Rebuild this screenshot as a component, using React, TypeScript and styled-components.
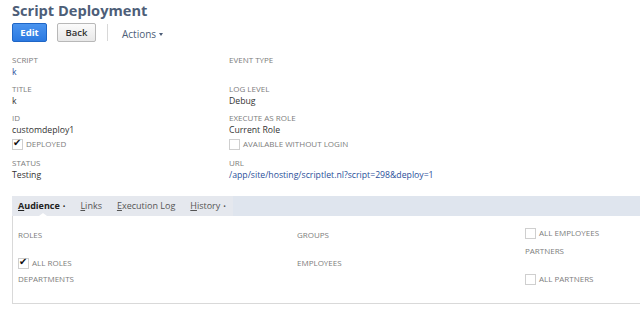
import React from 'react';
import styled, {createGlobalStyle} from 'styled-components';

const FONT = `'Open Sans', 'Noto Sans', Arial, sans-serif`;

const GlobalStyle = createGlobalStyle`
  html, body {
    margin: 0;
    padding: 0;
    background: #fff;
    overflow: hidden;
  }
  body {
    font-family: ${FONT};
  }
`;

type FieldData = {label: string; value?: string; link?: boolean};

const leftFields: FieldData[] = [
  {label: 'Script', value: 'k', link: true},
  {label: 'Title', value: 'k'},
  {label: 'ID', value: 'customdeploy1'},
];

const rightFields: FieldData[] = [
  {label: 'Event Type'},
  {label: 'Log Level', value: 'Debug'},
  {label: 'Execute As Role', value: 'Current Role'},
];

const tabs = [
  {key: 'A', rest: 'udience', active: true, dot: true},
  {key: 'L', rest: 'inks'},
  {key: 'E', rest: 'xecution Log'},
  {key: 'H', rest: 'istory', dot: true},
];

const Field = ({label, value, link}: FieldData) => (
  <FieldBox>
    <Label>{label}</Label>
    <Value $link={link}>{value ?? '\u00a0'}</Value>
  </FieldBox>
);

const Check = ({checked, label}: {checked?: boolean; label: string}) => (
  <CheckRow>
    <Box>{checked && <Tick>✔</Tick>}</Box>
    <Label>{label}</Label>
  </CheckRow>
);

export default function App() {
  return (
    <Page>
      <GlobalStyle />
      <Title>Script Deployment</Title>
      <Toolbar>
        <PrimaryButton>Edit</PrimaryButton>
        <Button>Back</Button>
        <Divider />
        <Actions>
          Actions<Caret />
        </Actions>
      </Toolbar>

      <Fields>
        <Column>
          {leftFields.map((f) => (
            <Field key={f.label} {...f} />
          ))}
          <FieldCheck>
            <Check checked label="Deployed" />
          </FieldCheck>
          <Field label="Status" value="Testing" />
        </Column>
        <Column>
          {rightFields.map((f) => (
            <Field key={f.label} {...f} />
          ))}
          <FieldCheck>
            <Check label="Available without login" />
          </FieldCheck>
          <Field
            label="URL"
            value="/app/site/hosting/scriptlet.nl?script=298&deploy=1"
            link
          />
        </Column>
      </Fields>

      <TabBar>
        <TabGroup>
          {tabs.map((t) => (
            <Tab key={t.key} $active={t.active}>
              <u>{t.key}</u>
              {t.rest}
              {t.dot && <Dot>•</Dot>}
            </Tab>
          ))}
          <Notch />
        </TabGroup>
      </TabBar>

      <Panel>
        <PanelColumn $width={279}>
          <PanelLabel $top={13}>Roles</PanelLabel>
          <PanelCheck $top={16}>
            <Check checked label="All Roles" />
          </PanelCheck>
          <PanelLabel $top={4}>Departments</PanelLabel>
        </PanelColumn>
        <PanelColumn $width={228}>
          <PanelLabel $top={13}>Groups</PanelLabel>
          <PanelLabel $top={16}>Employees</PanelLabel>
        </PanelColumn>
        <PanelColumn>
          <PanelCheck $top={11}>
            <Check label="All Employees" />
          </PanelCheck>
          <PanelLabel $top={6}>Partners</PanelLabel>
          <PanelCheck $top={16}>
            <Check label="All Partners" />
          </PanelCheck>
        </PanelColumn>
      </Panel>
    </Page>
  );
}

const Page = styled.div`
  width: 640px;
  box-sizing: border-box;
  padding-left: 12px;
  font-family: ${FONT};
`;

const Title = styled.h1`
  margin: 0;
  font-size: 14.6px;
  line-height: 20px;
  font-weight: 700;
  color: #4d5e78;
`;

const Toolbar = styled.div`
  display: flex;
  align-items: center;
  height: 19px;
  margin-top: 3px;
`;

const BaseButton = styled.button`
  height: 19px;
  padding: 0;
  border-radius: 2px;
  font-family: ${FONT};
  font-size: 9.5px;
  font-weight: 700;
  line-height: 17px;
  cursor: pointer;
`;

const PrimaryButton = styled(BaseButton)`
  width: 35px;
  background: linear-gradient(#4a94ef, #2b79e1);
  border: 1px solid #1f66c6;
  color: #fff;
`;

const Button = styled(BaseButton)`
  width: 39px;
  margin-left: 10px;
  background: linear-gradient(#fbfbfb, #e8e8e8);
  border: 1px solid #b8b8b8;
  color: #333;
  font-weight: 600;
`;

const Divider = styled.div`
  width: 1px;
  height: 17px;
  margin-left: 11px;
  background: #d8d8d8;
`;

const Actions = styled.div`
  display: flex;
  align-items: center;
  margin-left: 14px;
  margin-top: 3px;
  font-size: 10px;
  color: #4d5e78;
`;

const Caret = styled.span`
  display: inline-block;
  margin-left: 3px;
  width: 0;
  height: 0;
  border-left: 2.5px solid transparent;
  border-right: 2.5px solid transparent;
  border-top: 3px solid #4d5e78;
`;

const Fields = styled.div`
  display: grid;
  grid-template-columns: 217px 1fr;
  margin-top: 12px;
`;

const Column = styled.div`
  display: flex;
  flex-direction: column;
`;

const FieldBox = styled.div`
  display: flex;
  flex-direction: column;
  margin-bottom: 4px;
`;

const Label = styled.span`
  font-size: 8px;
  line-height: 12px;
  text-transform: uppercase;
  color: #7d7d7d;
  white-space: nowrap;
`;

const Value = styled.span<{$link?: boolean}>`
  font-size: 8.7px;
  line-height: 13px;
  color: ${({$link}) => ($link ? '#2b4f9a' : '#333')};
  white-space: nowrap;
`;

const FieldCheck = styled.div`
  height: 19px;
  margin-top: -3px;
`;

const CheckRow = styled.div`
  display: flex;
  align-items: center;
  gap: 3px;
  height: 12px;
`;

const Box = styled.span`
  position: relative;
  flex: none;
  width: 9px;
  height: 9px;
  border: 1px solid #cfcfcf;
  background: #fff;
`;

const Tick = styled.span`
  position: absolute;
  left: 0;
  top: -3px;
  font-size: 9.5px;
  line-height: 12px;
  color: #111;
`;

const TabBar = styled.div`
  height: 20px;
  margin-top: 10px;
  background: #dfe5ee;
`;

const TabGroup = styled.div`
  position: relative;
  display: flex;
  align-items: center;
  height: 20px;
  width: 221px;
  padding-left: 6px;
  box-sizing: border-box;
  background: #e5e8ee;
`;

const Tab = styled.span<{$active?: boolean}>`
  margin-right: 15px;
  font-size: 9px;
  line-height: 20px;
  color: ${({$active}) => ($active ? '#222' : '#555')};
  font-weight: ${({$active}) => ($active ? 700 : 400)};
  white-space: nowrap;
`;

const Dot = styled.span`
  margin-left: 3px;
  font-weight: 400;
  font-size: 7px;
`;

const Notch = styled.span`
  position: absolute;
  left: 27px;
  bottom: 0;
  width: 0;
  height: 0;
  border-left: 4px solid transparent;
  border-right: 4px solid transparent;
  border-bottom: 3px solid #fff;
`;

const Panel = styled.div`
  display: flex;
  height: 88px;
  padding-left: 5px;
  border: 1px solid #d9d9d9;
  border-top: none;
  border-right: none;
  box-sizing: border-box;
`;

const PanelColumn = styled.div<{$width?: number}>`
  display: flex;
  flex-direction: column;
  ${({$width}) => ($width ? `width: ${$width}px;` : 'flex: 1;')}
`;

const PanelLabel = styled(Label)<{$top: number}>`
  display: block;
  margin-top: ${({$top}) => $top}px;
`;

const PanelCheck = styled.div<{$top: number}>`
  margin-top: ${({$top}) => $top}px;
`;
